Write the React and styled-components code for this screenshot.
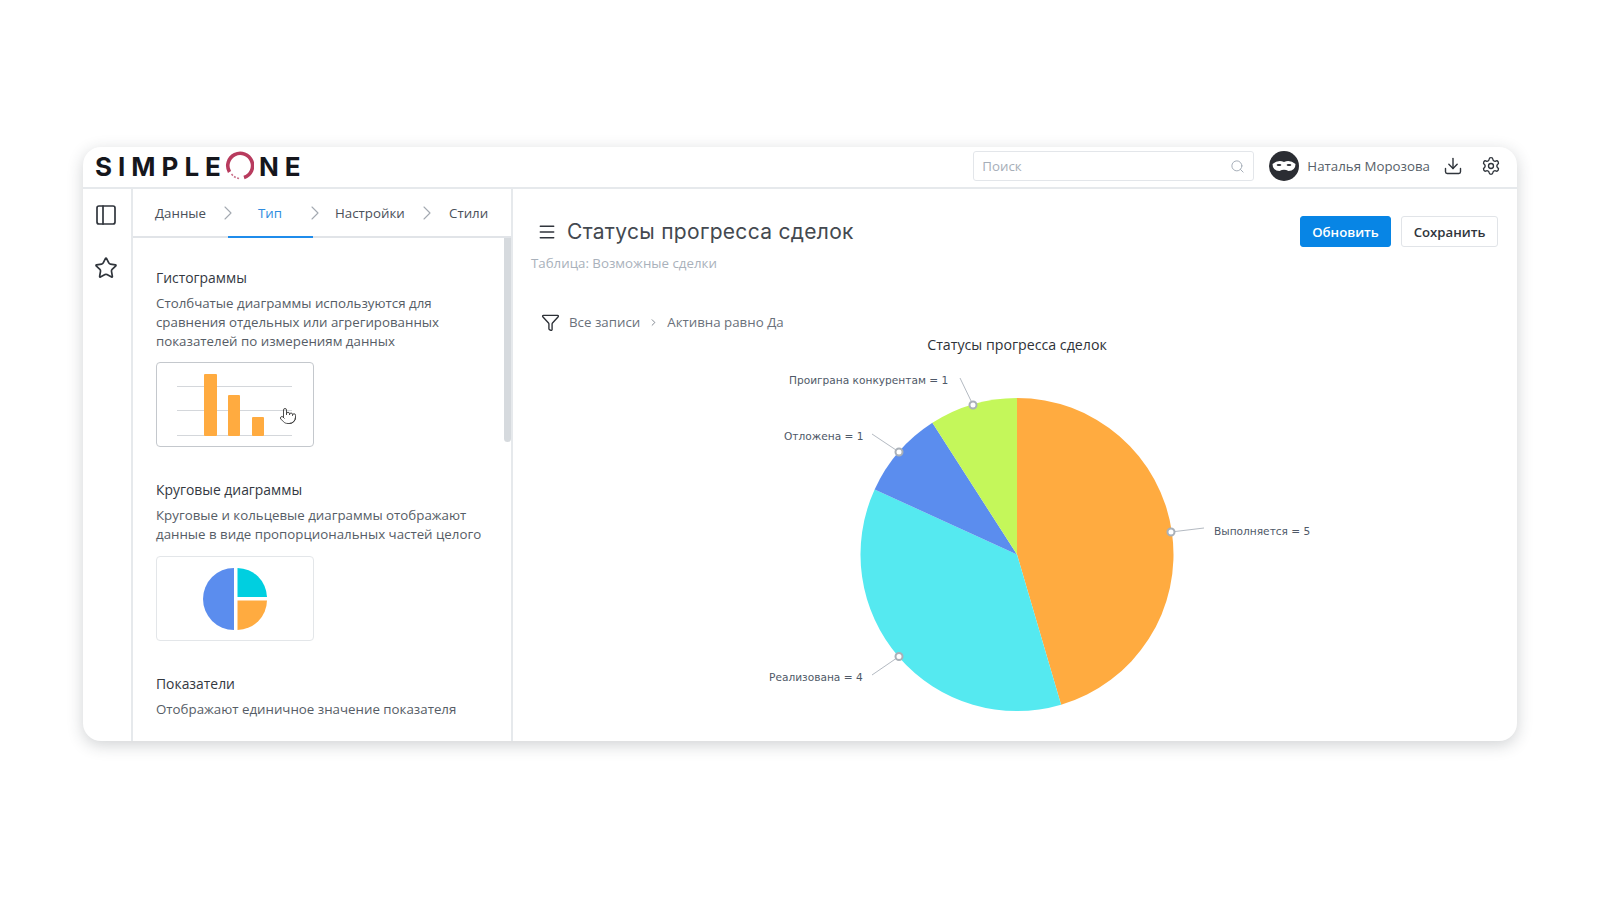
// chart builder screen: header, rail, chart type list and a pie preview
import styled, { createGlobalStyle } from "styled-components";
import {
  ChevronRight,
  Download,
  Funnel,
  Menu,
  PanelLeft,
  Pointer,
  Search,
  Settings,
  Star,
} from "lucide-react";

const GlobalStyle = createGlobalStyle`
  html, body { margin: 0; padding: 0; background: #fff; }
  * { box-sizing: border-box; }
  body { font-family: "Open Sans", "Liberation Sans", sans-serif; color: #2e3238; }
`;

const Page = styled.div`
  width: 1600px;
  height: 900px;
  padding: 147px 83px 0;
  overflow: hidden;
`;

const Card = styled.div`
  width: 1434px;
  height: 594px;
  display: flex;
  flex-direction: column;
  background: #fff;
  border-radius: 18px;
  box-shadow: 0 4px 16px rgba(40, 50, 60, 0.22);
  overflow: hidden;
`;

const Header = styled.header`
  height: 42px;
  flex: none;
  display: flex;
  align-items: center;
  padding: 0 16px 2px 12px;
  border-bottom: 2px solid #e6e9ec;
`;

const Logo = styled.div`
  display: flex;
  align-items: center;
  font-family: Inter, "Liberation Sans", sans-serif;
  font-weight: 700;
  font-size: 26px;
  letter-spacing: 6px;
  color: #15161c;
  margin-right: auto;
`;

const LogoRing = styled.svg`
  width: 30px;
  height: 30px;
  margin: 0 5px 0 -3px;
`;

const SearchBox = styled.div`
  width: 281px;
  height: 30px;
  display: flex;
  align-items: center;
  justify-content: space-between;
  padding: 0 8px;
  border: 1px solid #e3e6ea;
  border-radius: 3px;
  font-size: 13.3px;
  color: #a6aeb8;
`;

const Avatar = styled.svg`
  width: 30px;
  height: 30px;
  margin-left: 15px;
`;

const UserName = styled.span`
  margin-left: 8px;
  font-size: 13.3px;
  color: #575f69;
`;

const HeaderIcon = styled.span`
  display: flex;
  margin-left: ${(props) => props.gap}px;
  color: #30353c;
`;

const Body = styled.div`
  flex: 1;
  min-height: 0;
  display: flex;
`;

const Rail = styled.nav`
  width: 50px;
  flex: none;
  display: flex;
  flex-direction: column;
  align-items: center;
  gap: 29px;
  padding: 14px 3px 0 0;
  border-right: 2px solid #e6e9ec;
  color: #30353c;
`;

const Panel = styled.aside`
  width: 380px;
  flex: none;
  position: relative;
  display: flex;
  flex-direction: column;
  border-right: 2px solid #e6e9ec;
  overflow: hidden;
`;

const Tabs = styled.div`
  height: 49px;
  flex: none;
  display: flex;
  align-items: stretch;
  padding-left: 22px;
  border-bottom: 2px solid #e1e4e8;
`;

const Tab = styled.div`
  display: flex;
  flex: none;
  align-items: center;
  margin-bottom: -2px;
  width: ${(props) => props.width}px;
  font-size: 13.3px;
  color: ${(props) => (props.$active ? "#2f8ce0" : "#4a5059")};
  border-bottom: 2px solid ${(props) => (props.$active ? "#1f8ceb" : "transparent")};
  padding-left: ${(props) => props.inset || 0}px;
`;

const TabArrow = styled.span`
  display: flex;
  flex: none;
  align-items: center;
  width: ${(props) => props.width}px;
  margin-left: ${(props) => props.pull || 0}px;
  color: #a3a9b1;

  svg {
    flex: none;
  }
`;

const TypeList = styled.div`
  padding: 30px 0 0 23px;
`;

const TypeSection = styled.section`
  margin-bottom: ${(props) => props.after}px;
`;

const TypeTitle = styled.h3`
  margin: 0 0 7px;
  font-size: 13.9px;
  line-height: 19px;
  font-weight: 500;
  color: #33383f;
`;

const TypeText = styled.p`
  margin: 0 0 ${(props) => props.after || 0}px;
  width: 340px;
  font-size: 13.3px;
  line-height: 19px;
  color: #565d66;
`;

const Preview = styled.div`
  position: relative;
  width: 158px;
  height: 85px;
  display: flex;
  align-items: center;
  justify-content: center;
  background: #fff;
  border: 1px solid ${(props) => props.border};
  border-radius: 4px;
`;

const Scrollbar = styled.div`
  position: absolute;
  top: 49px;
  right: 0;
  width: 7px;
  height: 204px;
  background: #d6dade;
  border-radius: 0 0 4px 4px;
`;

const HandCursor = styled.span`
  position: absolute;
  left: 122px;
  top: 44px;
  display: flex;
  color: #3a3a3a;
`;

const Main = styled.main`
  flex: 1;
  min-width: 0;
  display: flex;
  flex-direction: column;
  padding: 27px 19px 0 18px;
`;

const TitleRow = styled.div`
  display: flex;
  align-items: center;
  height: 34px;
  padding-left: 6px;
`;

const PageTitle = styled.h1`
  margin: 0 auto 0 10px;
  font-family: Inter, "Open Sans", sans-serif;
  font-size: 21px;
  font-weight: 400;
  letter-spacing: 0.3px;
  color: #444950;
`;

const Button = styled.button`
  height: 31px;
  width: ${(props) => props.width}px;
  margin-left: 10px;
  border-radius: 3px;
  font-family: inherit;
  font-size: 13.2px;
  font-weight: 600;
  color: ${(props) => (props.$primary ? "#fff" : "#30353c")};
  background: ${(props) => (props.$primary ? "#0785e5" : "#fff")};
  border: 1px solid ${(props) => (props.$primary ? "#0785e5" : "#e1e4e8")};
`;

const TableNote = styled.div`
  margin-top: 7px;
  font-size: 13.3px;
  line-height: 19px;
  color: #a9b1bb;
`;

const FilterRow = styled.div`
  display: flex;
  align-items: center;
  margin-top: 39px;
  padding-left: 10px;
  font-size: 13.3px;
  line-height: 20px;
  color: #6a717b;
`;

const FilterIcon = styled.span`
  display: flex;
  margin-right: 9px;
  color: #2b2f35;
`;

const FilterArrow = styled.span`
  display: flex;
  margin: 0 8px;
`;

const ChartArea = styled.svg`
  display: block;
  width: 1003px;
  height: 418px;
  margin: 1px 0 0 -19.5px;
  flex: none;
`;

const ChartHeading = styled.text`
  font-family: "Open Sans", sans-serif;
  font-size: 14.2px;
  font-weight: 500;
  fill: #2e3238;
  text-anchor: middle;
`;

const SliceLabel = styled.text`
  font-family: "DejaVu Sans", sans-serif;
  font-size: 10.6px;
  fill: #4f5968;
`;

// pie is drawn in page-like coordinates, shifted by the chart svg origin
const CX = 505;
const CY = 221.5;
const R = 156.5;

const slices = [
  { value: 5, color: "#ffab40" },
  { value: 4, color: "#55e9f0" },
  { value: 1, color: "#5b8dee" },
  { value: 1, color: "#c4f75a" },
];

const callouts = [
  { text: "Выполняется = 5", x: 702, y: 202, line: "692,195 659,199", dot: [659, 199] },
  { text: "Реализована = 4", x: 257, y: 348, line: "360,342 387,323.5", dot: [387, 323.5] },
  { text: "Отложена = 1", x: 272, y: 107, line: "360,101 387,119", dot: [387, 119] },
  { text: "Проиграна конкурентам = 1", x: 277, y: 51, line: "448,45 461,72", dot: [461, 72] },
];

function slicePath(start, end) {
  const a0 = ((start - 90) * Math.PI) / 180;
  const a1 = ((end - 90) * Math.PI) / 180;
  const large = end - start > 180 ? 1 : 0;
  return `M${CX} ${CY} L${CX + R * Math.cos(a0)} ${CY + R * Math.sin(a0)} A${R} ${R} 0 ${large} 1 ${CX + R * Math.cos(a1)} ${CY + R * Math.sin(a1)} Z`;
}

function PieChart() {
  const total = slices.reduce((sum, s) => sum + s.value, 0);
  let angle = 0;
  return (
    <ChartArea viewBox="0 0 1003 418">
      <ChartHeading x="505" y="17">Статусы прогресса сделок</ChartHeading>
      {slices.map((s) => {
        const start = angle;
        angle += (s.value / total) * 360;
        return <path key={s.color} d={slicePath(start, angle)} fill={s.color} />;
      })}
      {callouts.map((c) => (
        <g key={c.text}>
          <polyline points={c.line} fill="none" stroke="#b4bac2" strokeWidth="1" />
          <circle cx={c.dot[0]} cy={c.dot[1]} r="3.5" fill="#fff" stroke="#a9b0b8" strokeWidth="2" />
          <SliceLabel x={c.x} y={c.y}>{c.text}</SliceLabel>
        </g>
      ))}
    </ChartArea>
  );
}

function BarThumb() {
  return (
    <svg width="156" height="83" viewBox="0 0 156 83">
      <g stroke="#d4d7db" strokeWidth="1">
        <line x1="20" x2="135" y1="23.5" y2="23.5" />
        <line x1="20" x2="135" y1="47.5" y2="47.5" />
        <line x1="20" x2="135" y1="72.5" y2="72.5" />
      </g>
      <g fill="#ffab40">
        <rect x="47" y="11" width="13" height="62" rx="1" />
        <rect x="71" y="32" width="12" height="41" rx="1" />
        <rect x="95" y="54" width="12" height="19" rx="1" />
      </g>
    </svg>
  );
}

function PieThumb() {
  return (
    <svg width="66" height="66" viewBox="0 0 66 66">
      <path d="M32 2 A31 31 0 0 0 32 64 Z" fill="#5b8dee" />
      <path d="M35.5 2 A30 30 0 0 1 65 31 L35.5 31 Z" fill="#00cfe0" />
      <path d="M35.5 34.5 L65 34.5 A30 30 0 0 1 35.5 64 Z" fill="#ffab40" />
    </svg>
  );
}

export default function App() {
  return (
    <Page>
      <GlobalStyle />
      <Card>
        <Header>
          <Logo>
            SIMPLE
            <LogoRing viewBox="0 0 30 30">
              <path d="M5.5 21 A12.4 12.4 0 1 1 20 26.5" fill="none" stroke="#b83b5e" strokeWidth="3.6" />
              <path d="M7.5 23 Q11 27.5 16.5 27.5" fill="none" stroke="#c9718a" strokeWidth="1.6" strokeDasharray="2 1.5" />
            </LogoRing>
            NE
          </Logo>
          <SearchBox>
            Поиск
            <Search size={15} color="#a6aeb8" strokeWidth={1.6} />
          </SearchBox>
          <Avatar viewBox="0 0 30 30">
            <circle cx="15" cy="15" r="15" fill="#2b2d33" />
            <path d="M3.5 13 Q9 8.5 15 11 Q21 8.5 26.5 13 Q26.5 19.5 19.5 20 Q15 17.5 10.5 20 Q3.5 19.5 3.5 13 Z" fill="#fff" />
            <ellipse cx="10" cy="14" rx="2.4" ry="1.1" fill="#2b2d33" />
            <ellipse cx="20" cy="14" rx="2.4" ry="1.1" fill="#2b2d33" />
          </Avatar>
          <UserName>Наталья Морозова</UserName>
          <HeaderIcon gap={13}>
            <Download size={20} strokeWidth={1.7} />
          </HeaderIcon>
          <HeaderIcon gap={18}>
            <Settings size={20} strokeWidth={1.6} />
          </HeaderIcon>
        </Header>
        <Body>
          <Rail>
            <PanelLeft size={24} strokeWidth={1.7} />
            <Star size={24} strokeWidth={1.7} />
          </Rail>
          <Panel>
            <Tabs>
              <Tab width={61}>Данные</Tab>
              <TabArrow width={12}>
                <ChevronRight size={24} strokeWidth={1.1} />
              </TabArrow>
              <Tab $active width={85} inset={30}>Тип</Tab>
              <TabArrow width={32} pull={-10}>
                <ChevronRight size={24} strokeWidth={1.1} />
              </TabArrow>
              <Tab width={80}>Настройки</Tab>
              <TabArrow width={34}>
                <ChevronRight size={24} strokeWidth={1.1} />
              </TabArrow>
              <Tab width={50}>Стили</Tab>
            </Tabs>
            <TypeList>
              <TypeSection after={33}>
                <TypeTitle>Гистограммы</TypeTitle>
                <TypeText after={11}>
                  Столбчатые диаграммы используются для
                  <br />
                  сравнения отдельных или агрегированных
                  <br />
                  показателей по измерениям данных
                </TypeText>
                <Preview border="#c4c8cd">
                  <BarThumb />
                  <HandCursor>
                    <Pointer size={18} strokeWidth={1.2} />
                  </HandCursor>
                </Preview>
              </TypeSection>
              <TypeSection after={33}>
                <TypeTitle>Круговые диаграммы</TypeTitle>
                <TypeText after={12}>
                  Круговые и кольцевые диаграммы отображают
                  <br />
                  данные в виде пропорциональных частей целого
                </TypeText>
                <Preview border="#e3e6e9">
                  <PieThumb />
                </Preview>
              </TypeSection>
              <TypeSection after={0}>
                <TypeTitle>Показатели</TypeTitle>
                <TypeText>Отображают единичное значение показателя</TypeText>
              </TypeSection>
            </TypeList>
            <Scrollbar />
          </Panel>
          <Main>
            <TitleRow>
              <Menu size={20} strokeWidth={1.8} color="#30353c" />
              <PageTitle>Статусы прогресса сделок</PageTitle>
              <Button $primary width={91}>Обновить</Button>
              <Button width={97}>Сохранить</Button>
            </TitleRow>
            <TableNote>Таблица: Возможные сделки</TableNote>
            <FilterRow>
              <FilterIcon>
                <Funnel size={19} strokeWidth={1.7} />
              </FilterIcon>
              Все записи
              <FilterArrow>
                <ChevronRight size={11} strokeWidth={1.8} />
              </FilterArrow>
              Активна равно Да
            </FilterRow>
            <PieChart />
          </Main>
        </Body>
      </Card>
    </Page>
  );
}
